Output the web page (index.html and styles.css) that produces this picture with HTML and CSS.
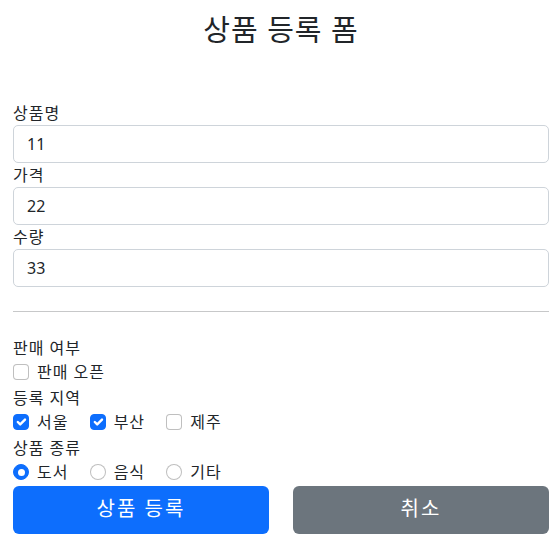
FILE: index.html
```html
<!DOCTYPE html>
<html lang="ko">
<head>
<meta charset="utf-8">
<title>상품 등록 폼</title>
<link rel="stylesheet" href="styles.css">
</head>
<body>
<div class="container">
  <div class="header">
    <h2 class="title">상품 등록 폼</h2>
  </div>
  <form class="form">
    <div>
      <label class="label">상품명</label>
      <div class="input">11</div>
    </div>
    <div>
      <label class="label">가격</label>
      <div class="input">22</div>
    </div>
    <div>
      <label class="label">수량</label>
      <div class="input">33</div>
    </div>
    <hr class="divider">
    <div class="line">판매 여부</div>
    <div class="check block">
      <span class="box"></span><span class="check-label">판매 오픈</span>
    </div>
    <div class="line">등록 지역</div>
    <div class="inline-row">
      <div class="check inline"><span class="box checked"><svg viewBox="0 0 20 20" width="16" height="16"><path d="m6 10 3 3 6-6" fill="none" stroke="#fff" stroke-linecap="round" stroke-linejoin="round" stroke-width="3"/></svg></span><span class="check-label">서울</span></div>
      <div class="check inline"><span class="box checked"><svg viewBox="0 0 20 20" width="16" height="16"><path d="m6 10 3 3 6-6" fill="none" stroke="#fff" stroke-linecap="round" stroke-linejoin="round" stroke-width="3"/></svg></span><span class="check-label">부산</span></div>
      <div class="check inline"><span class="box"></span><span class="check-label">제주</span></div>
    </div>
    <div class="line">상품 종류</div>
    <div class="inline-row">
      <div class="check inline"><span class="box radio checked"><span class="dot"></span></span><span class="check-label">도서</span></div>
      <div class="check inline"><span class="box radio"></span><span class="check-label">음식</span></div>
      <div class="check inline"><span class="box radio"></span><span class="check-label">기타</span></div>
    </div>
    <div class="buttons">
      <div class="btn primary">상품 등록</div>
      <div class="btn secondary">취소</div>
    </div>
  </form>
</div>
</body>
</html>
```

FILE: styles.css
```css
html, body {
  margin: 0;
  padding: 0;
  background: #fff;
}
body {
  font-family: "Noto Sans", "Noto Sans CJK KR", sans-serif;
  font-size: 16px;
  line-height: 1.5;
  color: #212529;
  letter-spacing: 1px;
}
.container {
  padding: 0 8px 0 13px;
}
.header {
  text-align: center;
  padding: 12px 0 46px;
}
.title {
  margin: 0 0 8px;
  font-size: 29px;
  line-height: 35px;
  font-weight: 400;
  letter-spacing: 1px;
}
.form {
  margin: 0;
}
.label {
  display: block;
  height: 24px;
}
.input {
  box-sizing: border-box;
  height: 38px;
  padding: 6px 13px;
  border: 1px solid #ced4da;
  border-radius: 5px;
  line-height: 24px;
  color: #212529;
  letter-spacing: 0;
}
.divider {
  margin: 24px 0;
  border: 0;
  border-top: 1px solid #212529;
  opacity: 0.25;
}
.line {
  height: 24px;
}
.check {
  min-height: 24px;
  padding-left: 24px;
  margin-bottom: 2px;
  position: relative;
}
.check.block {
  display: block;
}
.check.inline {
  display: inline-block;
  margin-right: 16px;
}
.box {
  position: absolute;
  left: 0;
  top: 4px;
  box-sizing: border-box;
  width: 16px;
  height: 16px;
  border: 1px solid rgba(0, 0, 0, 0.25);
  border-radius: 4px;
  background: #fff;
  display: flex;
  align-items: center;
  justify-content: center;
}
.box svg {
  display: block;
  flex: none;
}
.box.checked {
  background: #0d6efd;
  border-color: #0d6efd;
}
.box.radio {
  border-radius: 50%;
}
.dot {
  width: 7px;
  height: 7px;
  border-radius: 50%;
  background: #fff;
}
.check-label {
  display: inline-block;
}
.buttons {
  display: grid;
  grid-template-columns: 1fr 1fr;
  column-gap: 24px;
}
.btn {
  box-sizing: border-box;
  height: 48px;
  border-radius: 6px;
  color: #fff;
  font-size: 20px;
  line-height: 46px;
  text-align: center;
  letter-spacing: 2px;
}
.btn.primary {
  background: #0d6efd;
}
.btn.secondary {
  background: #6c757d;
}
```
